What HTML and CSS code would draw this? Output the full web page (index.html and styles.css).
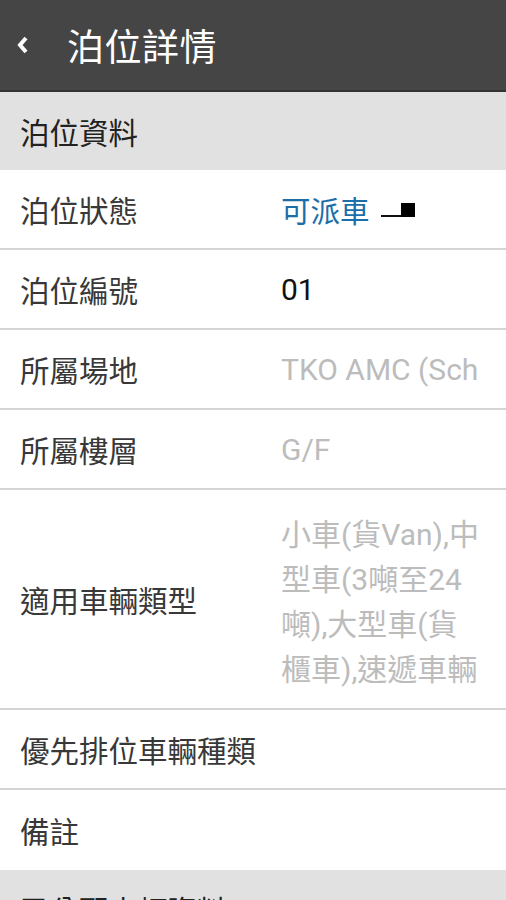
FILE: index.html
```html
<!DOCTYPE html>
<html>
<head>
    <meta charset="UTF-8">
    <title>泊位詳情</title>
    <link rel="stylesheet" href="styles.css">
</head>
<body>
    <div class="topbar">
        <svg class="back" width="16" height="20" viewBox="0 0 16 20">
            <path d="M11 3 L5 10 L11 17" fill="none" stroke="#fff" stroke-width="4"/>
        </svg>
        <h1>泊位詳情</h1>
    </div>

    <div class="section">泊位資料</div>
    <div class="row">
        <div class="label">泊位狀態</div>
        <div class="value blue">可派車 <span class="toggle"><span class="toggle-line"></span><span class="toggle-box"></span></span></div>
    </div>
    <div class="row">
        <div class="label">泊位編號</div>
        <div class="value dark">01</div>
    </div>
    <div class="row">
        <div class="label">所屬場地</div>
        <div class="value">TKO AMC (Sch</div>
    </div>
    <div class="row">
        <div class="label">所屬樓層</div>
        <div class="value">G/F</div>
    </div>
    <div class="row tall">
        <div class="label">適用車輛類型</div>
        <div class="value wrap">小車(貨Van),中<br>型車(3噸至24<br>噸),大型車(貨<br>櫃車),速遞車輛</div>
    </div>
    <div class="row">
        <div class="label">優先排位車輛種類</div>
        <div class="value"></div>
    </div>
    <div class="row last">
        <div class="label">備註</div>
        <div class="value"></div>
    </div>
    <div class="section">已分配車輛資料</div>
</body>
</html>
```

FILE: styles.css
```css
body { margin: 0; background: #fff; font-family: Roboto, "Noto Sans CJK TC", sans-serif; color: #333; overflow: hidden; }
.topbar {
    height: 90px; background: #454545; border-bottom: 2px solid #333;
    display: flex; align-items: center; padding-left: 15px;
}
.back { margin-right: 36px; margin-top: 0; }
.topbar h1 { margin: 0; color: #fff; font-size: 37px; font-weight: normal; letter-spacing: 0.5px; }
.section {
    height: 78px; background: #e1e1e1; padding-left: 20px;
    display: flex; align-items: center; font-size: 29.5px; color: #222;
}
.row {
    display: grid; grid-template-columns: 261px 1fr; align-items: center;
    min-height: 78px; padding-left: 20px; border-bottom: 2px solid #d4d4d4; font-size: 29.5px;
}
.row.last { border-bottom: none; min-height: 80px; }
.row.tall { min-height: 218px; }
.label { color: #383838; }
.value { color: #bcbcbc; overflow: hidden; white-space: nowrap; padding-right: 10px; font-size: 30px; }
.value.dark { color: #111; }
.value.blue { color: #1b6ea8; display: flex; align-items: center; gap: 11px; font-size: 29.5px; }
.value.wrap { line-height: 45px; margin-top: 6px; }
.toggle { display: flex; align-items: flex-end; height: 14px; margin-top: 2px; }
.toggle-line { width: 20px; height: 2px; background: #111; }
.toggle-box { width: 14px; height: 14px; background: #000; }
```
